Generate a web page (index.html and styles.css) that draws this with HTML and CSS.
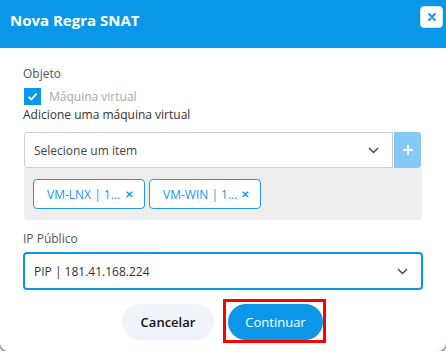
FILE: index.html
```html
<!DOCTYPE html>
<html lang="pt-BR">
<head>
  <meta charset="UTF-8" />
  <title>Nova Regra SNAT</title>
  <link rel="stylesheet" href="styles.css">
</head>
<body>
  <div class="modal">
    <!-- Header -->
    <header class="modal-header">
      <h2 class="modal-title">Nova Regra SNAT</h2>
      <button class="btn-close" aria-label="Fechar">
        <svg width="10" height="10" viewBox="0 0 10 10"><path d="M2 2 L8 8 M8 2 L2 8" stroke="#1a8fe0" stroke-width="1.8" stroke-linecap="round"/></svg>
      </button>
    </header>

    <div class="modal-body">
      <p class="label">Objeto</p>

      <label class="check-row">
        <span class="checkbox">
          <svg width="13" height="13" viewBox="0 0 13 13"><path d="M2.5 6.8 L5.3 9.4 L10.6 3.6" fill="none" stroke="#fff" stroke-width="1.8"/></svg>
        </span>
        <span class="check-text">Máquina virtual</span>
      </label>

      <p class="label dark">Adicione uma máquina virtual</p>

      <div class="select-row">
        <div class="select">
          <span>Selecione um item</span>
          <svg class="chevron" width="11" height="7" viewBox="0 0 11 7"><path d="M1 1 L5.5 5.5 L10 1" fill="none" stroke="#444" stroke-width="1.4"/></svg>
        </div>
        <button class="btn-add" aria-label="Adicionar">
          <svg width="12" height="12" viewBox="0 0 12 12"><path d="M6 1 V11 M1 6 H11" stroke="#fff" stroke-width="2"/></svg>
        </button>
      </div>

      <div class="tags">
        <span class="tag">VM-LNX | 1... <span class="tag-x">&#x2715;</span></span>
        <span class="tag">VM-WIN | 1... <span class="tag-x">&#x2715;</span></span>
      </div>

      <p class="label ip-label">IP Público</p>

      <div class="select select-active">
        <span>PIP | 181.41.168.224</span>
        <svg class="chevron" width="11" height="7" viewBox="0 0 11 7"><path d="M1 1 L5.5 5.5 L10 1" fill="none" stroke="#444" stroke-width="1.4"/></svg>
      </div>

      <div class="actions">
        <button class="btn btn-cancel">Cancelar</button>
        <span class="highlight">
          <button class="btn btn-primary">Continuar</button>
        </span>
      </div>
    </div>
  </div>
</body>
</html>
```

FILE: styles.css
```css
* {
  box-sizing: border-box;
  margin: 0;
  padding: 0;
}

body {
  font-family: 'Open Sans', 'Noto Sans', sans-serif;
  background: #fff;
  color: #333;
  font-size: 12px;
}

.modal {
  width: 446px;
  height: 351px;
  background: #fff;
  border-radius: 0 0 8px 8px;
  box-shadow: 0 1px 1px 1px #8c8c8c;
  overflow: hidden;
}

.modal-header {
  height: 48px;
  background: #0a97e8;
  display: flex;
  justify-content: space-between;
  align-items: flex-start;
  padding: 10px 3px 0 10px;
}

.modal-title {
  color: #fff;
  font-size: 15px;
  font-weight: 700;
  line-height: 20px;
}

.btn-close {
  width: 23px;
  height: 22px;
  margin-top: -4px;
  background: #fff;
  border: 1px solid #d6e6f3;
  border-radius: 4px;
  display: flex;
  align-items: center;
  justify-content: center;
  cursor: pointer;
}

.modal-body {
  padding: 17px 23px 0;
}

.label {
  line-height: 18px;
  color: #555;
}

.label.dark {
  color: #333;
}

.check-row {
  display: flex;
  align-items: center;
  gap: 8px;
  margin: 5px 0 1px 1px;
  height: 17px;
}

.checkbox {
  width: 17px;
  height: 17px;
  background: #0a97e8;
  display: flex;
  align-items: center;
  justify-content: center;
}

.check-text {
  color: #a9a9a9;
}

.select-row {
  display: flex;
  margin: 8px 2px 0 1px;
  height: 36px;
}

.select {
  flex: 1;
  display: flex;
  align-items: center;
  justify-content: space-between;
  padding: 0 13px 0 9px;
  border: 1px solid #cfcfcf;
  border-radius: 3px 0 0 3px;
  background: #fff;
  color: #444;
}

.btn-add {
  width: 27px;
  margin-left: 1px;
  background: #85caf5;
  border: none;
  border-radius: 0 3px 3px 0;
  display: flex;
  align-items: center;
  justify-content: center;
}

.tags {
  display: flex;
  gap: 4px;
  margin: 0 1px;
  padding: 11px 9px;
  background: #eeeeee;
  border-radius: 0 0 4px 4px;
}

.tag {
  width: 112px;
  height: 30px;
  display: flex;
  align-items: center;
  justify-content: space-between;
  padding: 0 11px 0 13px;
  border: 1px solid #2196f3;
  border-radius: 4px;
  background: #fff;
  color: #2196f3;
  white-space: nowrap;
}

.tag-x {
  font-size: 10px;
  font-weight: 700;
}

.ip-label {
  margin-top: 10px;
}

.select-active {
  margin-top: 4px;
  height: 38px;
  border: 2px solid #0a97e8;
  border-radius: 4px;
  padding: 0 13px 0 9px;
  color: #333;
}

.actions {
  display: flex;
  justify-content: center;
  align-items: flex-start;
  gap: 9px;
  margin-top: 9px;
  padding-left: 2px;
}

.btn {
  height: 36px;
  border: none;
  border-radius: 18px;
  font-family: inherit;
  font-size: 13px;
  cursor: pointer;
}

.btn-cancel {
  width: 92px;
  margin-top: 5px;
  background: #f0f4f8;
  color: #111;
  font-weight: 600;
}

.highlight {
  display: block;
  border: 3px solid #ff0000;
  padding: 2px 0 0 2px;
}

.btn-primary {
  display: block;
  width: 95px;
  background: #0a97e8;
  color: #fff;
}
```
